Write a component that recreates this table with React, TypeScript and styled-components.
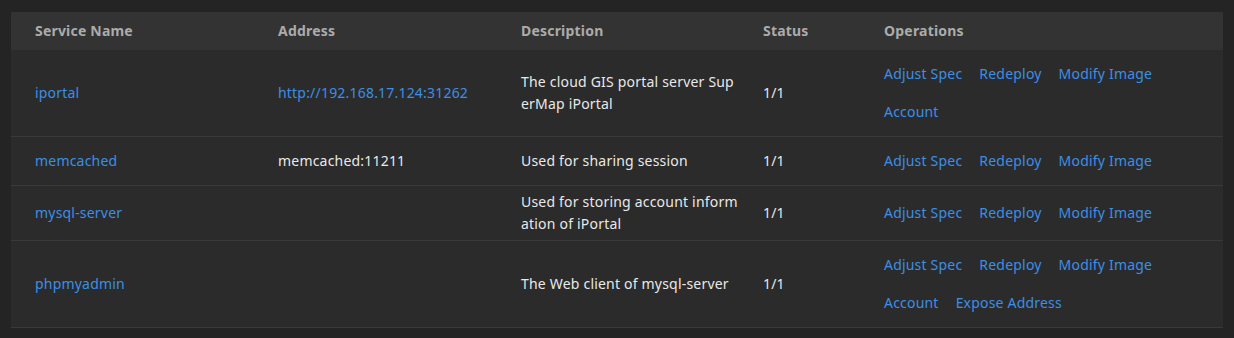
import styled, { createGlobalStyle } from 'styled-components';

const GlobalStyle = createGlobalStyle`
  html, body {
    margin: 0;
    padding: 0;
    background: #242424;
  }
  body {
    font-family: "Noto Sans", "Liberation Sans", sans-serif;
    font-size: 14px;
    letter-spacing: 0.2px;
  }
`;

const Page = styled.div`
  padding: 12px 11px 10px 11px;
`;

const Table = styled.table`
  width: 1212px;
  border-collapse: collapse;
  table-layout: fixed;
  background: #2b2b2b;
`;

const HeadCell = styled.th`
  background: #333333;
  color: #ababab;
  font-weight: 700;
  text-align: left;
  line-height: 22px;
  padding: 8px 4px 8px 24px;
`;

const Row = styled.tr`
  border-bottom: 1px solid #3a3a3a;
`;

const Cell = styled.td<{ $tight?: boolean }>`
  color: #e8e8e8;
  line-height: 22px;
  padding: 5px ${(p) => (p.$tight ? '0' : '4px')} 5px 24px;
  vertical-align: middle;
  word-break: break-all;
`;

const Link = styled.a`
  color: #3b8fe6;
  text-decoration: none;
  cursor: pointer;
`;

const Ops = styled.div`
  display: flex;
  flex-wrap: wrap;
  width: 300px;
`;

const OpLink = styled(Link)`
  line-height: 22px;
  margin: 8px 17px 8px 0;
`;

type Service = {
  name: string;
  address?: string;
  addressLink?: boolean;
  description: string;
  status: string;
  ops: string[];
};

const services: Service[] = [
  {
    name: 'iportal',
    address: 'http://192.168.17.124:31262',
    addressLink: true,
    description: 'The cloud GIS portal server SuperMap iPortal',
    status: '1/1',
    ops: ['Adjust Spec', 'Redeploy', 'Modify Image', 'Account'],
  },
  {
    name: 'memcached',
    address: 'memcached:11211',
    description: 'Used for sharing session',
    status: '1/1',
    ops: ['Adjust Spec', 'Redeploy', 'Modify Image'],
  },
  {
    name: 'mysql-server',
    description: 'Used for storing account information of iPortal',
    status: '1/1',
    ops: ['Adjust Spec', 'Redeploy', 'Modify Image'],
  },
  {
    name: 'phpmyadmin',
    description: 'The Web client of mysql-server',
    status: '1/1',
    ops: ['Adjust Spec', 'Redeploy', 'Modify Image', 'Account', 'Expose Address'],
  },
];

export default function App() {
  return (
    <>
      <GlobalStyle />
      <Page>
        <Table>
          <colgroup>
            <col style={{ width: 243 }} />
            <col style={{ width: 243 }} />
            <col style={{ width: 242 }} />
            <col style={{ width: 121 }} />
            <col />
          </colgroup>
          <thead>
            <tr>
              <HeadCell>Service Name</HeadCell>
              <HeadCell>Address</HeadCell>
              <HeadCell>Description</HeadCell>
              <HeadCell>Status</HeadCell>
              <HeadCell>Operations</HeadCell>
            </tr>
          </thead>
          <tbody>
            {services.map((s) => (
              <Row key={s.name}>
                <Cell>
                  <Link>{s.name}</Link>
                </Cell>
                <Cell>{s.address && (s.addressLink ? <Link>{s.address}</Link> : s.address)}</Cell>
                <Cell $tight>{s.description}</Cell>
                <Cell>{s.status}</Cell>
                <Cell>
                  <Ops>
                    {s.ops.map((op) => (
                      <OpLink key={op}>{op}</OpLink>
                    ))}
                  </Ops>
                </Cell>
              </Row>
            ))}
          </tbody>
        </Table>
      </Page>
    </>
  );
}
